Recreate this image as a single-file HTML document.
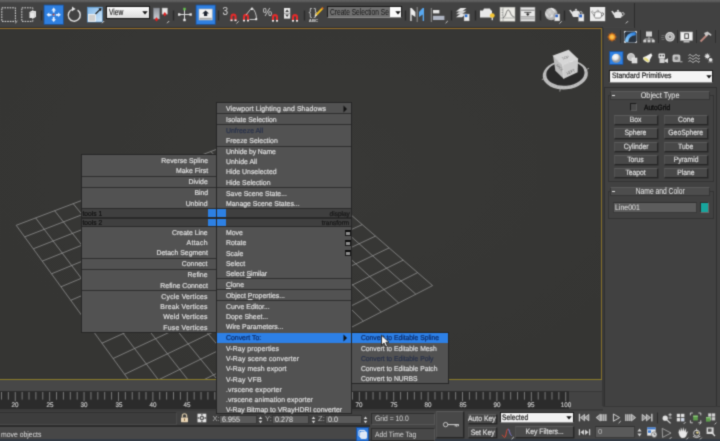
<!DOCTYPE html><html><head><meta charset="utf-8"><title>3ds Max</title><style>
*{box-sizing:border-box;margin:0;padding:0}
html,body{width:720px;height:441px;overflow:hidden;background:#444}
body{position:relative;filter:url(#soft);font-family:"Liberation Sans",Arial,sans-serif;font-size:7px;color:#e4e4e4;line-height:1}
.a{position:absolute}
.t{position:absolute;white-space:nowrap;line-height:10px;height:10px}
.mi{position:absolute;left:8.8px;white-space:nowrap;line-height:10px;height:10px;color:#dedede;transform:scaleX(.972) rotate(.03deg);transform-origin:0 50%;margin-top:.6px;-webkit-text-stroke:.22px}
.mr{position:absolute;right:9px;white-space:nowrap;line-height:10px;height:10px;color:#dedede;text-align:right;transform:scaleX(.972) rotate(.03deg);transform-origin:100% 50%;margin-top:.6px;-webkit-text-stroke:.22px}
.sep{position:absolute;left:0;right:0;height:1px;background:#2e2e2e}
.menu{position:absolute;background:#525252;border:1px solid #262626}
.btn{position:absolute;background:#484848;border:1px solid #262626;border-top-color:#5a5a5a;border-left-color:#525252;box-shadow:.5px .5px 0 #2a2a2a;color:#e0e0e0;text-align:center;font-size:7.5px;white-space:nowrap;display:flex;justify-content:center;-webkit-text-stroke:.15px}
.fld{position:absolute;background:#5a5a5a;border:1px solid #3a3a3a;border-top-color:#303030;color:#e2e2e2;white-space:nowrap;overflow:hidden}
u{text-decoration:underline}
.n{display:inline-block;transform:scaleX(.87) rotate(.03deg);transform-origin:0 50%}
.nc{display:inline-block;transform:scaleX(.88) rotate(.03deg);transform-origin:50% 50%}
</style></head><body><svg width="0" height="0" style="position:absolute"><filter id="soft" x="0" y="0" width="100%" height="100%" color-interpolation-filters="sRGB"><feConvolveMatrix order="3" kernelMatrix="0.0277 0.1110 0.0277 0.1110 0.4452 0.1110 0.0277 0.1110 0.0277" divisor="1" edgeMode="duplicate" preserveAlpha="true"/></filter></svg>
<div class="a" style="left:0;top:0;width:720px;height:3px;background:linear-gradient(#626262,#545454 70%,#3a3a3a)"></div>
<div class="a" style="left:0;top:3px;width:634px;height:24px;background:#424242"></div>
<div class="a" style="left:634px;top:3px;width:86px;height:25px;background:#414141;border-left:1px solid #2c2c2c"></div>
<div class="a" style="left:0;top:27px;width:603px;height:353px;background:#353535;border-top:1px solid #2e2e2e"></div>
<div class="a" style="left:-2px;top:27.8px;width:603.9px;height:351.8px;border:1.2px solid #86702a;border-top:1.1px solid #98702a;border-bottom:1.1px solid #8a7c2a;background:radial-gradient(ellipse at 55% 40%,#383836 0%,#353533 80%)"></div>
<svg class="a" style="left:0;top:29px" width="600" height="350" viewBox="0 29 600 350"><path d="M16.2 225.3L161.4 424.9M16.2 225.3L257.5 133.8M35.6 217.9L183.8 413.4M24.6 236.9L268.0 142.9M54.6 210.7L205.6 402.2M33.3 248.8L278.7 152.2M73.2 203.7L226.9 391.2M42.3 261.1L289.7 161.8M91.5 196.7L247.8 380.5M51.5 273.8L301.0 171.5M109.5 189.9L268.1 370.0M61.0 286.8L312.6 181.6M127.1 183.2L288.0 359.8M70.8 300.3L324.5 191.9M144.5 176.7L307.5 349.8M80.9 314.2L336.7 202.5M161.5 170.2L326.5 340.0M91.3 328.5L349.3 213.4M178.2 163.9L345.2 330.5M102.0 343.2L362.2 224.6M194.6 157.7L363.4 321.1M113.1 358.5L375.5 236.1M210.8 151.6L381.2 311.9M124.6 374.3L389.1 247.9M226.6 145.5L398.7 303.0M136.5 390.6L403.2 260.1M242.2 139.6L415.8 294.2M148.7 407.4L417.7 272.6M257.5 133.8L432.6 285.6M161.4 424.9L432.6 285.6" stroke="#989898" stroke-width="0.9" fill="none" opacity="0.8"/></svg>
<svg class="a" style="left:535px;top:42px" width="62" height="56" viewBox="535 42 62 56"><g transform="rotate(-5 565.3 74.7)"><ellipse cx="565.3" cy="74.2" rx="20" ry="12.6" fill="#282828" fill-opacity="0.8"/><path fill-rule="evenodd" d="M542.7 74.7A22.6 14.6 0 1 0 587.9 74.7A22.6 14.6 0 1 0 542.7 74.7ZM546.3 73.6A19.2 12.2 0 1 0 584.7 73.6A19.2 12.2 0 1 0 546.3 73.6Z" fill="#bebebe"/><path d="M541.5 77.5L544.5 76.5M586.5 71.5L589.5 70.3M559 88L558.4 91M571.5 60.8L572 58.5" stroke="#b0b0b0" stroke-width="0.8"/><ellipse cx="565.3" cy="74.4" rx="21" ry="12.7" fill="none" stroke="#8a8a8a" stroke-width="0.5" stroke-dasharray="0.8 2.4"/></g><path d="M553 55.6L568.6 49.8L578.1 58.8L562.5 65.2Z" fill="#d6d6d6"/><path d="M553 55.6L562.5 65.2L563.7 78.7L555.4 70.7Z" fill="#bcbcbc"/><path d="M562.5 65.2L578.1 58.8L577.6 72.3L563.7 78.7Z" fill="#cbcbcb"/><path d="M553 55.6L562.5 65.2L578.1 58.8M562.5 65.2L563.7 78.7" stroke="#f0f0f0" stroke-width="0.7" fill="none"/><text x="566.5" y="73.2" font-family="Liberation Sans, Arial, sans-serif" font-size="3.6" fill="#555" transform="rotate(-22 570 72)">LEFT</text><text x="562" y="59" font-family="Liberation Sans, Arial, sans-serif" font-size="3.4" fill="#666" transform="rotate(-20 565 58)">TOP</text><text x="556" y="67" font-family="Liberation Sans, Arial, sans-serif" font-size="3.2" fill="#666" transform="rotate(45 558 66)">BACK</text></svg>
<div class="a" style="left:0;top:380px;width:603px;height:11px;background:#474747"></div>
<div class="a" style="left:0;top:391px;width:568.5px;height:18px;background:#2b2b2b"></div>
<div class="a" style="left:568.5px;top:391px;width:34px;height:18px;background:#434343;border-top:1px solid #383838"></div>
<div class="a" style="left:0;top:409px;width:603px;height:2px;background:#3a3a3a"></div>
<svg class="a" style="left:0;top:391px" width="570" height="12" viewBox="0 391 570 12"><path d="M1.49 392V399.6M8.37 392V399.6M15.25 392V401.2M22.13 392V399.6M29.01 392V399.6M35.89 392V399.6M42.77 392V399.6M49.66 392V401.2M56.54 392V399.6M63.42 392V399.6M70.30 392V399.6M77.18 392V399.6M84.06 392V401.2M90.94 392V399.6M97.82 392V399.6M104.70 392V399.6M111.58 392V399.6M118.47 392V401.2M125.35 392V399.6M132.23 392V399.6M139.11 392V399.6M145.99 392V399.6M152.87 392V401.2M159.75 392V399.6M166.63 392V399.6M173.51 392V399.6M180.39 392V399.6M187.28 392V401.2M194.16 392V399.6M201.04 392V399.6M207.92 392V399.6M214.80 392V399.6M221.68 392V401.2M228.56 392V399.6M235.44 392V399.6M242.32 392V399.6M249.20 392V399.6M256.09 392V401.2M262.97 392V399.6M269.85 392V399.6M276.73 392V399.6M283.61 392V399.6M290.49 392V401.2M297.37 392V399.6M304.25 392V399.6M311.13 392V399.6M318.01 392V399.6M324.89 392V401.2M331.78 392V399.6M338.66 392V399.6M345.54 392V399.6M352.42 392V399.6M359.30 392V401.2M366.18 392V399.6M373.06 392V399.6M379.94 392V399.6M386.82 392V399.6M393.71 392V401.2M400.59 392V399.6M407.47 392V399.6M414.35 392V399.6M421.23 392V399.6M428.11 392V401.2M434.99 392V399.6M441.87 392V399.6M448.75 392V399.6M455.63 392V399.6M462.51 392V401.2M469.40 392V399.6M476.28 392V399.6M483.16 392V399.6M490.04 392V399.6M496.92 392V401.2M503.80 392V399.6M510.68 392V399.6M517.56 392V399.6M524.44 392V399.6M531.33 392V401.2M538.21 392V399.6M545.09 392V399.6M551.97 392V399.6M558.85 392V399.6M565.73 392V401.2" stroke="#828282" stroke-width="0.9" fill="none"/></svg>
<div class="t" style="left:5.2px;top:399.6px;width:20px;text-align:center;font-size:6.7px;color:#d0d0d0;transform:scaleX(.94) rotate(.03deg);-webkit-text-stroke:.15px">20</div>
<div class="t" style="left:39.7px;top:399.6px;width:20px;text-align:center;font-size:6.7px;color:#d0d0d0;transform:scaleX(.94) rotate(.03deg);-webkit-text-stroke:.15px">25</div>
<div class="t" style="left:74.1px;top:399.6px;width:20px;text-align:center;font-size:6.7px;color:#d0d0d0;transform:scaleX(.94) rotate(.03deg);-webkit-text-stroke:.15px">30</div>
<div class="t" style="left:108.5px;top:399.6px;width:20px;text-align:center;font-size:6.7px;color:#d0d0d0;transform:scaleX(.94) rotate(.03deg);-webkit-text-stroke:.15px">35</div>
<div class="t" style="left:142.9px;top:399.6px;width:20px;text-align:center;font-size:6.7px;color:#d0d0d0;transform:scaleX(.94) rotate(.03deg);-webkit-text-stroke:.15px">40</div>
<div class="t" style="left:177.3px;top:399.6px;width:20px;text-align:center;font-size:6.7px;color:#d0d0d0;transform:scaleX(.94) rotate(.03deg);-webkit-text-stroke:.15px">45</div>
<div class="t" style="left:211.7px;top:399.6px;width:20px;text-align:center;font-size:6.7px;color:#d0d0d0;transform:scaleX(.94) rotate(.03deg);-webkit-text-stroke:.15px">50</div>
<div class="t" style="left:246.1px;top:399.6px;width:20px;text-align:center;font-size:6.7px;color:#d0d0d0;transform:scaleX(.94) rotate(.03deg);-webkit-text-stroke:.15px">55</div>
<div class="t" style="left:280.5px;top:399.6px;width:20px;text-align:center;font-size:6.7px;color:#d0d0d0;transform:scaleX(.94) rotate(.03deg);-webkit-text-stroke:.15px">60</div>
<div class="t" style="left:314.9px;top:399.6px;width:20px;text-align:center;font-size:6.7px;color:#d0d0d0;transform:scaleX(.94) rotate(.03deg);-webkit-text-stroke:.15px">65</div>
<div class="t" style="left:349.3px;top:399.6px;width:20px;text-align:center;font-size:6.7px;color:#d0d0d0;transform:scaleX(.94) rotate(.03deg);-webkit-text-stroke:.15px">70</div>
<div class="t" style="left:383.7px;top:399.6px;width:20px;text-align:center;font-size:6.7px;color:#d0d0d0;transform:scaleX(.94) rotate(.03deg);-webkit-text-stroke:.15px">75</div>
<div class="t" style="left:418.1px;top:399.6px;width:20px;text-align:center;font-size:6.7px;color:#d0d0d0;transform:scaleX(.94) rotate(.03deg);-webkit-text-stroke:.15px">80</div>
<div class="t" style="left:452.5px;top:399.6px;width:20px;text-align:center;font-size:6.7px;color:#d0d0d0;transform:scaleX(.94) rotate(.03deg);-webkit-text-stroke:.15px">85</div>
<div class="t" style="left:486.9px;top:399.6px;width:20px;text-align:center;font-size:6.7px;color:#d0d0d0;transform:scaleX(.94) rotate(.03deg);-webkit-text-stroke:.15px">90</div>
<div class="t" style="left:521.3px;top:399.6px;width:20px;text-align:center;font-size:6.7px;color:#d0d0d0;transform:scaleX(.94) rotate(.03deg);-webkit-text-stroke:.15px">95</div>
<div class="t" style="left:555.7px;top:399.6px;width:20px;text-align:center;font-size:6.7px;color:#d0d0d0;transform:scaleX(.94) rotate(.03deg);-webkit-text-stroke:.15px">100</div>
<div class="a" style="left:0;top:411px;width:720px;height:14px;background:#444"></div><div class="a" style="left:0;top:411px;width:370px;height:14px;background:#404040"></div><div class="a" style="left:-2px;top:411.6px;width:178.5px;height:13px;background:#3d3d3d;border:1px solid #303030;border-bottom-color:#4a4a4a;border-right-color:#4a4a4a"></div>
<div class="a" style="left:0;top:424.7px;width:370px;height:2px;background:#2c2c2c"></div>
<div class="a" style="left:0;top:426.5px;width:370px;height:14.5px;background:#474747"></div>
<div class="a" style="left:0;top:439.2px;width:720px;height:1.8px;background:#333a44"></div>
<div class="t" style="left:1px;top:429.6px;font-size:7.8px;color:#dedede"><span class="n" style="transform:scaleX(.88) rotate(.03deg)">move objects</span></div>
<svg class="a" style="left:180px;top:413px" width="9" height="10" viewBox="0 0 9 10"><path d="M2.3 4.6V3A2.2 2.2 0 0 1 6.7 3V4.6" fill="none" stroke="#d9c9a8" stroke-width="1.1"/><rect x="1" y="4.4" width="7" height="4.8" rx="0.6" fill="#e8d4b4"/><rect x="4" y="5.6" width="1" height="2.2" fill="#8a6a40"/></svg>
<svg class="a" style="left:197px;top:413px" width="10" height="10" viewBox="0 0 10 10"><rect x="0.5" y="0.7" width="8.8" height="8.6" fill="#e4e4e4"/><circle cx="4.9" cy="5" r="2.3" fill="#555"/><path d="M4.9 0.7V2.6M4.9 7.4V9.3M0.5 5H2.4M7.4 5H9.3" stroke="#555" stroke-width="1.3"/><circle cx="4.9" cy="5" r="1" fill="#e4e4e4"/></svg>
<div class="t" style="left:212.5px;top:413.8px;font-size:7.6px;color:#b4b4b4">X:</div>
<div class="fld" style="left:219px;top:414.5px;width:38px;height:9.5px;font-size:7.8px;line-height:7.5px;padding-left:2px"><span class="n" style="transform:scaleX(.92) rotate(.03deg)">6.955</span></div>
<svg class="a" style="left:258.3px;top:415.6px" width="5" height="8" viewBox="0 0 5 8"><path d="M2.5 0.6L4.3 3H0.7ZM2.5 7.2L0.7 4.8H4.3Z" fill="#dadada"/></svg>
<div class="t" style="left:265px;top:413.8px;font-size:7.6px;color:#b4b4b4">Y:</div>
<div class="fld" style="left:271.5px;top:414.5px;width:37.5px;height:9.5px;font-size:7.8px;line-height:7.5px;padding-left:2px"><span class="n" style="transform:scaleX(.92) rotate(.03deg)">0.278</span></div>
<svg class="a" style="left:310.8px;top:415.6px" width="5" height="8" viewBox="0 0 5 8"><path d="M2.5 0.6L4.3 3H0.7ZM2.5 7.2L0.7 4.8H4.3Z" fill="#dadada"/></svg>
<div class="t" style="left:318px;top:413.8px;font-size:7.6px;color:#b4b4b4">Z:</div>
<div class="fld" style="left:324.5px;top:414.5px;width:37px;height:9.5px;font-size:7.8px;line-height:7.5px;padding-left:2px"><span class="n" style="transform:scaleX(.92) rotate(.03deg)">0.0</span></div>
<svg class="a" style="left:363.3px;top:415.6px" width="5" height="8" viewBox="0 0 5 8"><path d="M2.5 0.6L4.3 3H0.7ZM2.5 7.2L0.7 4.8H4.3Z" fill="#dadada"/></svg>
<div class="a" style="left:370.5px;top:412.5px;width:64px;height:12.5px;background:#484848;border:1px solid #2e2e2e;border-right-color:#565656;border-bottom-color:#565656;font-size:7.8px;line-height:10.5px;padding-left:3.5px;color:#d8d8d8;white-space:nowrap"><span class="n">Grid = 10.0</span></div>
<div class="a" style="left:370.5px;top:427.5px;width:64px;height:13.5px;background:#484848;border:1px solid #2e2e2e;border-right-color:#565656;font-size:7.8px;line-height:11.5px;padding-left:3.5px;color:#d8d8d8;white-space:nowrap"><span class="n">Add Time Tag</span></div>
<svg class="a" style="left:355.5px;top:427px" width="13" height="14" viewBox="0 0 13 14"><rect x="0.5" y="0.5" width="12" height="13.5" fill="#2d7be0" stroke="#1b4f9a"/><rect x="3" y="3.4" width="6" height="6" rx="0.8" fill="none" stroke="#f4f4f4" stroke-width="1"/><rect x="4.6" y="5" width="6" height="6.4" rx="0.8" fill="#dfe8f6" stroke="#f4f4f4" stroke-width="0.9"/></svg>
<div class="btn" style="left:435.8px;top:411px;width:28.4px;height:27.4px;background:#484848"></div>
<svg class="a" style="left:442px;top:420px" width="19" height="9" viewBox="0 0 19 9"><circle cx="3.6" cy="4.6" r="2.2" fill="none" stroke="#cfcfcf" stroke-width="0.9"/><path d="M5.8 4.6H16.8M13.2 4.6V6.4M14.8 4.6V6.9M16.4 4.6V6.2" stroke="#cfcfcf" stroke-width="1" fill="none"/></svg>
<div class="btn" style="left:467.5px;top:413.8px;width:29.4px;height:10px;line-height:8px;font-size:7.8px;background:#494949"><span class="nc">Auto Key</span></div>
<div class="btn" style="left:467.5px;top:426.7px;width:29.4px;height:11px;line-height:9px;font-size:7.8px;background:#494949"><span class="nc">Set Key</span></div>
<div class="a" style="left:500px;top:411.6px;width:73.5px;height:11.5px;background:#f2f2f2;border:1px solid #1e1e1e;border-bottom-color:#8a8a8a;color:#161616;font-size:8px;line-height:9.5px;padding-left:1px;white-space:nowrap"><span class="n" style="transform:scaleX(.84) rotate(.03deg);-webkit-text-stroke:.2px">Selected</span></div>
<svg class="a" style="left:566px;top:416.2px" width="6" height="4" viewBox="0 0 6 4"><path d="M0.3 0.3H5.7L3 3.6Z" fill="#111"/></svg>
<svg class="a" style="left:501px;top:426px" width="14" height="14" viewBox="0 0 14 14"><path d="M0.8 9C2 9 2.6 11.4 3.6 11.4C5.4 11.4 5 3 7 3C8.6 3 8.6 9.5 10.8 9.5" fill="none" stroke="#d84a3a" stroke-width="1"/><path d="M7 3C8.6 3 8.6 9.5 10.8 9.5" fill="none" stroke="#4a78d8" stroke-width="1"/><path d="M10.6 13.2L12.8 11" stroke="#ddd" stroke-width="0.9"/></svg>
<div class="btn" style="left:515px;top:426px;width:58.5px;height:12px;line-height:10px;font-size:7.8px;background:#4a4a4a"><span class="nc">Key Filters...</span></div>
<div class="a" style="left:603px;top:28px;width:117px;height:378px;background:#414141"></div>
<div class="a" style="left:602px;top:28px;width:2px;height:378px;background:#383838"></div>
<div class="a" style="left:620px;top:30px;width:1px;height:13px;background:#2f2f2f"></div>
<div class="a" style="left:640px;top:30px;width:1px;height:13px;background:#2f2f2f"></div>
<div class="a" style="left:658px;top:30px;width:1px;height:13px;background:#2f2f2f"></div>
<div class="a" style="left:677px;top:30px;width:1px;height:13px;background:#2f2f2f"></div>
<div class="a" style="left:696px;top:30px;width:1px;height:13px;background:#2f2f2f"></div>
<div class="a" style="left:715px;top:30px;width:1px;height:13px;background:#2f2f2f"></div>
<svg class="a" style="left:600px;top:28px" width="120" height="40" viewBox="600 28 120 40"><defs><radialGradient id="sun"><stop offset="0" stop-color="#fff8b8"/><stop offset="0.3" stop-color="#ffc840"/><stop offset="0.5" stop-color="#f09a28"/><stop offset="0.7" stop-color="#c8641a" stop-opacity="0.8"/><stop offset="1" stop-color="#6a3a1a" stop-opacity="0"/></radialGradient><radialGradient id="ball" cx="0.4" cy="0.35"><stop offset="0" stop-color="#fff"/><stop offset="0.6" stop-color="#e6e6e6"/><stop offset="1" stop-color="#9a9a9a"/></radialGradient><linearGradient id="arc" x1="0" y1="1" x2="1" y2="0"><stop offset="0" stop-color="#8fd0ff"/><stop offset="1" stop-color="#2a7fe0"/></linearGradient></defs><circle cx="612" cy="37" r="4.9" fill="url(#sun)"/><path d="M612 32V42M607 37H617M608.5 33.5L615.5 40.5M615.5 33.5L608.5 40.5" stroke="#e89030" stroke-width="0.5" opacity="0.6"/><rect x="624.5" y="31.5" width="12" height="11" fill="#2a3440" stroke="#8a98a8" stroke-width="0.6"/><path d="M626.6 41.8Q627 34.2 635.6 33.6" stroke="url(#arc)" stroke-width="3.3" fill="none"/><path d="M624.5 33V31.5H626M635 31.5H636.5V33M636.5 41V42.5H635M626 42.5H624.5V41" stroke="#f0f0f0" stroke-width="0.7" fill="none"/><rect x="646" y="31.5" width="6" height="5" fill="#cfcfcf"/><path d="M649 36.5V39M644.8 41V39H653.2V41" stroke="#bdbdbd" stroke-width="0.9" fill="none"/><rect x="643.3" y="39.8" width="3" height="2.6" fill="#cfcfcf"/><rect x="647.5" y="39.8" width="3" height="2.6" fill="#cfcfcf"/><rect x="651.7" y="39.8" width="3" height="2.6" fill="#cfcfcf"/><circle cx="670" cy="36.8" r="4.2" fill="#a8a8a8" stroke="#dcdcdc" stroke-width="1.2"/><circle cx="670" cy="36.8" r="1.9" fill="#777" stroke="#ececec" stroke-width="0.8"/><path d="M661.5 35.5H664.5M661 37.5H664M661.5 39.5H664.5" stroke="#7a7a7a" stroke-width="0.7"/><rect x="680.5" y="32" width="12" height="8.4" fill="#f0f0f0" stroke="#bbb" stroke-width="0.6"/><rect x="684.8" y="33.8" width="3.6" height="4.6" fill="none" stroke="#333" stroke-width="0.9"/><rect x="683.5" y="41.2" width="6" height="1.2" fill="#ddd"/><path d="M700.5 41.5L707.5 34.5" stroke="#c08a80" stroke-width="1.8"/><path d="M704 33L707.5 31.5L711.5 34.5L711 36L708.5 34.5L706 36.5Z" fill="#c9c9c9"/><rect x="609.5" y="51.5" width="13.5" height="13" fill="#2d80e3" stroke="#1b4f9a" stroke-width="0.8"/><circle cx="616.2" cy="58.2" r="4.5" fill="url(#ball)"/><circle cx="631" cy="57" r="3.6" fill="#bdbdbd" stroke="#e8e8e8" stroke-width="0.8"/><rect x="632" y="58" width="5" height="5" fill="#d9d9d9" stroke="#f2f2f2" stroke-width="0.6"/><path d="M651.2 53.2L652.2 55.4L649 61.6L643.6 57.6Z" fill="#f2f2f2"/><ellipse cx="646.4" cy="59.6" rx="3.5" ry="1.7" fill="#e6dc7a" stroke="#f4f4f4" stroke-width="0.7" transform="rotate(36 646.4 59.6)"/><rect x="658.5" y="53.5" width="6.5" height="5" rx="1" fill="#e0e0e0"/><rect x="659.5" y="58.5" width="5" height="4.5" fill="#cfcfcf"/><path d="M664.5 60L668 58.3V63L664.5 61.5Z" fill="#dcdcdc"/><circle cx="660.5" cy="55.6" r="0.9" fill="#444"/><circle cx="663.3" cy="55.6" r="0.9" fill="#444"/><rect x="673" y="55" width="6.8" height="6.6" rx="1" fill="#b9b9b9" stroke="#e6e6e6" stroke-width="0.8"/><circle cx="676.4" cy="58.3" r="1.7" fill="#777"/><path d="M679.8 61.8H682.5" stroke="#ddd" stroke-width="0.8"/><path d="M688.5 55.5Q690 53.5 691.5 55.5T694.5 55.5T697.5 55.5T699.5 55M688.5 58.5Q690 56.5 691.5 58.5T694.5 58.5T697.5 58.5T699.5 58M688.5 61.5Q690 59.5 691.5 61.5T694.5 61.5T697.5 61.5T699.5 61" stroke="#c8c8c8" stroke-width="0.9" fill="none"/><circle cx="707.3" cy="56.2" r="2" fill="#f0f0f0"/><circle cx="710.6" cy="59.8" r="1.9" fill="#e4e4e4"/><path d="M707.3 53V59.4M704.2 56.2H710.4M705.1 54L709.5 58.4M709.5 54L705.1 58.4" stroke="#d8d8d8" stroke-width="0.6"/><path d="M708 62H713" stroke="#bbb" stroke-width="0.6"/></svg>
<div class="a" style="left:609px;top:70px;width:104px;height:12.5px;background:#f4f4f4;border:1px solid #1e1e1e;border-bottom-color:#888;color:#1c1c1c;font-size:7.9px;line-height:10.5px;padding-left:1.8px;white-space:nowrap"><span class="n" style="-webkit-text-stroke:.2px">Standard Primitives</span></div>
<svg class="a" style="left:705.5px;top:75px" width="6" height="4" viewBox="0 0 6 4"><path d="M0.3 0.3H5.7L3 3.6Z" fill="#111"/></svg>
<div class="a" style="left:604px;top:87px;width:113px;height:319.5px;border:1px solid #303030"></div><div class="a" style="left:603px;top:406px;width:117px;height:1px;background:#383838"></div>
<div class="a" style="left:607.5px;top:95px;width:106.5px;height:86.5px;border:1px solid #333"></div>
<div class="a" style="left:610px;top:91px;width:100px;height:9px;background:#4d4d4d;border:1px solid #363636;border-top-color:#5a5a5a;color:#ececec;font-size:8.3px;line-height:7.5px;text-align:center;white-space:nowrap"><span class="nc">Object Type</span></div>
<div class="a" style="left:612px;top:94.5px;width:3px;height:1px;background:#ddd"></div>
<div class="a" style="left:629.7px;top:103px;width:7.5px;height:7.5px;background:#4a4a4a;border:1px solid #1c1c1c;border-right-color:#5a5a5a;border-bottom-color:#5a5a5a"></div>
<div class="t" style="left:644px;top:102.5px;color:#0c0c0c;font-size:7.6px;-webkit-text-stroke:.3px"><span class="n">AutoGrid</span></div>
<div class="btn" style="left:614px;top:114.6px;width:43.5px;height:10.4px;line-height:8.4px;font-size:7.7px"><span class="nc">Box</span></div>
<div class="btn" style="left:664px;top:114.6px;width:43.5px;height:10.4px;line-height:8.4px;font-size:7.7px"><span class="nc">Cone</span></div>
<div class="btn" style="left:614px;top:128.2px;width:43.5px;height:10.4px;line-height:8.4px;font-size:7.7px"><span class="nc">Sphere</span></div>
<div class="btn" style="left:664px;top:128.2px;width:43.5px;height:10.4px;line-height:8.4px;font-size:7.7px"><span class="nc">GeoSphere</span></div>
<div class="btn" style="left:614px;top:141.6px;width:43.5px;height:10.4px;line-height:8.4px;font-size:7.7px"><span class="nc">Cylinder</span></div>
<div class="btn" style="left:664px;top:141.6px;width:43.5px;height:10.4px;line-height:8.4px;font-size:7.7px"><span class="nc">Tube</span></div>
<div class="btn" style="left:614px;top:154.6px;width:43.5px;height:10.4px;line-height:8.4px;font-size:7.7px"><span class="nc">Torus</span></div>
<div class="btn" style="left:664px;top:154.6px;width:43.5px;height:10.4px;line-height:8.4px;font-size:7.7px"><span class="nc">Pyramid</span></div>
<div class="btn" style="left:614px;top:167.8px;width:43.5px;height:10.4px;line-height:8.4px;font-size:7.7px"><span class="nc">Teapot</span></div>
<div class="btn" style="left:664px;top:167.8px;width:43.5px;height:10.4px;line-height:8.4px;font-size:7.7px"><span class="nc">Plane</span></div>
<div class="a" style="left:607.5px;top:191px;width:106.5px;height:27.5px;border:1px solid #333"></div>
<div class="a" style="left:610px;top:186.7px;width:100px;height:9.3px;background:#4d4d4d;border:1px solid #363636;border-top-color:#5a5a5a;color:#ececec;font-size:8.3px;line-height:7.8px;text-align:center;white-space:nowrap"><span class="nc" style="transform:scaleX(.81)">Name and Color</span></div>
<div class="a" style="left:612px;top:191px;width:3px;height:1px;background:#ddd"></div>
<div class="fld" style="left:612.5px;top:201.7px;width:84px;height:11px;font-size:8px;line-height:9px;padding-left:1.5px;background:#5c5c5c"><span class="n">Line001</span></div>
<div class="a" style="left:699.5px;top:201.7px;width:9.8px;height:11.3px;background:#17a59d;border:1px solid #2e2e2e;border-right-color:#6a6a6a;border-bottom-color:#6a6a6a"></div>
<svg class="a" style="left:0;top:0" width="640" height="28" viewBox="0 0 640 28"><defs><linearGradient id="pv" x1="0" y1="0" x2="0" y2="1"><stop offset="0" stop-color="#8d9299"/><stop offset="1" stop-color="#c9ccd2"/></linearGradient><linearGradient id="sc" x1="0" y1="0" x2="1" y2="1"><stop offset="0" stop-color="#7fb6e8"/><stop offset="1" stop-color="#cfe6f8"/></linearGradient><radialGradient id="mat" cx="0.4" cy="0.35"><stop offset="0" stop-color="#fff"/><stop offset="0.65" stop-color="#ececec"/><stop offset="1" stop-color="#b0b0b0"/></radialGradient></defs><rect x="1.8" y="7.8" width="13.6" height="13.6" fill="none" stroke="#e4e4e4" stroke-width="1" stroke-dasharray="1.6 1"/><path d="M15.2 23.2L17.4 21.0" stroke="#ddd" stroke-width="0.9"/><rect x="21.8" y="7.8" width="11" height="13.6" fill="none" stroke="#dcdcdc" stroke-width="1" stroke-dasharray="1.6 1"/><path d="M29.5 12.5L31 11H36V16.5L34.5 18H29.5Z" fill="#e9e9e9"/><path d="M29.5 12.5H34.5V18M34.5 12.5L36 11" stroke="#bdbdbd" stroke-width="0.5" fill="none"/><rect x="40.8" y="10.5" width="1.4" height="10" fill="#2a2a2a"/><rect x="44" y="5" width="19.5" height="19.5" fill="#2e7fe0" stroke="#1d4f94" stroke-width="0.8"/><path d="M53.7 7.6L56 10.4H54.6V12.6H52.8V10.4H51.4ZM53.7 22L51.4 19.2H52.8V17H54.6V19.2H56ZM46.5 14.8L49.3 12.5V13.9H51.5V15.7H49.3V17.1ZM60.9 14.8L58.1 17.1V15.7H55.9V13.9H58.1V12.5Z" fill="#e8f2ff"/><rect x="52.9" y="14" width="1.7" height="1.7" fill="#f4f4f4" stroke="#a03030" stroke-width="0.5"/><path d="M72.6 9.4A6 6 0 1 0 77.6 10.2" fill="none" stroke="#e2e2e2" stroke-width="1.4"/><path d="M72 6.6L75.6 9L72 11.2Z" fill="#e2e2e2"/><rect x="87.5" y="7.2" width="14.8" height="14.8" fill="url(#sc)" stroke="#5a9bd8" stroke-width="0.6"/><rect x="88.5" y="14.5" width="7" height="6.8" fill="#cfcfcf" stroke="#f4f4f4" stroke-width="0.8"/><path d="M95.5 14L100.5 9" stroke="#1a1a1a" stroke-width="1.1"/><path d="M101.6 8L98.4 8.6L101 11.2Z" fill="#1a1a1a"/><path d="M102 23.2L104.2 21.0" stroke="#ddd" stroke-width="0.9"/><rect x="153.3" y="8" width="6.4" height="11" fill="url(#pv)" stroke="#6f7379" stroke-width="0.5"/><path d="M156.5 17.2L158.3 19.4L156.5 21.6L154.7 19.4Z" fill="#e02020"/><rect x="162" y="8" width="5.6" height="6.2" fill="#e6e6e6" stroke="#999" stroke-width="0.5"/><path d="M164.8 12L166.5 14.2L164.8 16.4L163.1 14.2Z" fill="#e02020"/><path d="M167 23.2L169.2 21.0" stroke="#ddd" stroke-width="0.9"/><rect x="172.8" y="10.5" width="1.4" height="10" fill="#2a2a2a"/><path d="M184.5 9V20M178.5 14.5H191" stroke="#d8d8d8" stroke-width="1"/><rect x="183.3" y="7.8" width="2.4" height="2.4" fill="#68c850"/><rect x="178" y="13.3" width="2.4" height="2.4" fill="#e8e8e8"/><rect x="189.4" y="13.3" width="2.4" height="2.4" fill="#e8e8e8"/><rect x="183.3" y="18.8" width="2.4" height="2.4" fill="#e8e8e8"/><rect x="196" y="5" width="19.3" height="19.5" fill="#2e7fe0" stroke="#1d4f94" stroke-width="0.8"/><rect x="199" y="9" width="13.2" height="11" fill="#f2f2f2" stroke="#b8b8b8" stroke-width="0.6"/><rect x="199.5" y="17.8" width="12.2" height="1.8" fill="#a9a9a9"/><path d="M205.6 10.4L209 13.6H207.2V16H204V13.6H202.2Z" fill="#1e2430"/><rect x="217.8" y="10.5" width="1.4" height="10" fill="#2a2a2a"/><text x="222.5" y="15.2" font-family="Liberation Sans, Arial, sans-serif" font-size="10" fill="#d8d8d8">3</text><path d="M230.5 20.5V16.5A3 3 0 0 1 236.5 16.5V20.5H234.5V16.7A1 1 0 0 0 232.5 16.7V20.5Z" fill="#e42a2a"/><rect x="230.5" y="19.5" width="2" height="1.6" fill="#f2f2f2"/><rect x="234.5" y="19.5" width="2" height="1.6" fill="#f2f2f2"/><path d="M236.5 23.5L238.7 21.3" stroke="#ddd" stroke-width="0.9"/><path d="M243 20.8V16.8A3 3 0 0 1 249 16.8V20.8H247V17.0A1 1 0 0 0 245 17.0V20.8Z" fill="#e42a2a"/><rect x="243" y="19.8" width="2" height="1.6" fill="#f2f2f2"/><rect x="247" y="19.8" width="2" height="1.6" fill="#f2f2f2"/><path d="M246 15L252 7.5Q256.5 12 256.5 19.5H249.5" fill="none" stroke="#d4d4d4" stroke-width="0.9"/><rect x="251" y="8.2" width="1.8" height="1.8" fill="#eee"/><rect x="255.2" y="18.2" width="2" height="2" fill="#eee"/><text x="262.8" y="15.8" font-family="Liberation Sans, Arial, sans-serif" font-size="10.5" fill="#d8d8d8">%</text><path d="M272 21V17A3 3 0 0 1 278 17V21H276V17.2A1 1 0 0 0 274 17.2V21Z" fill="#e42a2a"/><rect x="272" y="20" width="2" height="1.6" fill="#f2f2f2"/><rect x="276" y="20" width="2" height="1.6" fill="#f2f2f2"/><rect x="284" y="8" width="6.2" height="10.6" fill="#e8e8e8"/><path d="M287.1 9.6L289 12H285.2ZM287.1 17L285.2 14.6H289Z" fill="#444"/><path d="M284 13.3H290.2" stroke="#777" stroke-width="0.6"/><path d="M292 21V17A3 3 0 0 1 298 17V21H296V17.2A1 1 0 0 0 294 17.2V21Z" fill="#e42a2a"/><rect x="292" y="20" width="2" height="1.6" fill="#f2f2f2"/><rect x="296" y="20" width="2" height="1.6" fill="#f2f2f2"/><rect x="303.8" y="10.5" width="1.4" height="10" fill="#2a2a2a"/><text x="308.6" y="16" font-family="Liberation Sans, Arial, sans-serif" font-size="11" fill="#c4c4c4" textLength="8.6" lengthAdjust="spacing">{}</text><text x="308.8" y="22.3" font-family="Liberation Sans, Arial, sans-serif" font-size="3.6" font-weight="bold" fill="#d8d8d8" textLength="9.3" lengthAdjust="spacingAndGlyphs">ABC</text><path d="M315.8 15.4L322.2 8.6" stroke="#f0c020" stroke-width="2"/><path d="M322 8.8L323 7.7" stroke="#e07020" stroke-width="2"/><path d="M315 16.4L316.6 14.6" stroke="#eee" stroke-width="1.4"/><rect x="404.8" y="10.5" width="1.4" height="10" fill="#2a2a2a"/><path d="M410.3 8H411.6L415.4 12V17L411.6 14.5V21H410.3Z" fill="#ececec"/><path d="M417.2 7V22" stroke="#9a9a9a" stroke-width="0.9"/><path d="M424 8H422.7L419 12V17L422.7 14.5V21H424Z" fill="#58a8f0"/><path d="M431.3 8V22" stroke="#9a9a9a" stroke-width="0.9"/><rect x="433" y="10" width="6.4" height="3.4" fill="#e4e4e4"/><rect x="433" y="15.8" width="11.4" height="4.2" fill="#aeb4c2"/><path d="M445.6 23.2L447.8 21.0" stroke="#ddd" stroke-width="0.9"/><rect x="450.8" y="10.5" width="1.4" height="10" fill="#2a2a2a"/><path d="M456 11.5L460.5 8H466.5L462 11.5Z" fill="#e8e8e8"/><path d="M456 14.3L460.5 10.8H466.5L462 14.3Z" fill="#d0d0d0"/><path d="M456 17.3L460.5 13.8H466.5L462 17.3Z" fill="#e4e4e4"/><rect x="464" y="14" width="5.4" height="7" fill="#e9e9e9" stroke="#888" stroke-width="0.4"/><rect x="464.8" y="14.5" width="2.6" height="2.6" fill="#2a6fd0"/><rect x="474.8" y="10.5" width="1.4" height="10" fill="#2a2a2a"/><path d="M480 10.5H483L484 8.5H490L491 10.5H492V17.5H480Z" fill="#e9e9e9"/><circle cx="492.3" cy="15.6" r="2.4" fill="#f4c430"/><rect x="491.6" y="17.6" width="1.4" height="2.6" fill="#ddd"/><rect x="500" y="7.2" width="15" height="14" fill="#ecebe6" stroke="#b5b5b0" stroke-width="0.5"/><path d="M503 7.5V21M500.5 18H515" stroke="#8a8a8a" stroke-width="0.6"/><path d="M503 17.5C506 17.5 506 10 508.2 10S510.5 17 514.5 17" fill="none" stroke="#555" stroke-width="0.8"/><path d="M501.5 10H503M501.5 12.5H503M501.5 15H503" stroke="#666" stroke-width="0.5"/><rect x="520.4" y="7.2" width="14.6" height="14" fill="#e9e9e9" stroke="#9a9a9a" stroke-width="0.5"/><rect x="520.8" y="9.6" width="13.8" height="1.2" fill="#8a8a8a"/><rect x="520.8" y="16.4" width="13.8" height="1" fill="#8a8a8a"/><rect x="520.8" y="18.4" width="13.8" height="1" fill="#9a9a9a"/><path d="M524.3 12.4H531.3" stroke="#333" stroke-width="0.8"/><path d="M527.8 12.4V14.2" stroke="#333" stroke-width="1"/><path d="M525.8 13.8H529.8L527.8 16Z" fill="#2a2a2a"/><rect x="539.8" y="10.5" width="1.4" height="10" fill="#2a2a2a"/><circle cx="551.2" cy="14" r="6.2" fill="url(#mat)"/><path d="M547 9.5L549.5 12L547 14.5L544.8 12ZM552 9.5L554.5 12L552 14.5L549.5 12ZM549.5 12.2L552 14.7L549.5 17.2L547 14.7ZM554.5 12.2L556.8 14.7L554.5 17.2L552 14.7ZM549.5 7.2L552 9.5L549.5 11.8L547.2 9.5Z" fill="#555" opacity="0.3"/><rect x="554.5" y="14" width="5.4" height="7" fill="#e9e9e9" stroke="#888" stroke-width="0.4"/><rect x="555.3" y="14.6" width="2.6" height="2.6" fill="#2a5fc0"/><path d="M559.5 23.5L561.7 21.3" stroke="#ddd" stroke-width="0.9"/><rect x="563.8" y="10.5" width="1.4" height="10" fill="#2a2a2a"/><g transform="translate(569 8.2) scale(1.0)"><path d="M3 5.5C3 2.8 5 2.2 7 2.2C9 2.2 11 2.8 11 5.5C11 7.4 10.2 8.6 9.4 8.9H4.6C3.8 8.6 3 7.4 3 5.5Z" fill="#e4e4e4" stroke="none" stroke-width="0.7"/><circle cx="7" cy="1.5" r="0.9" fill="#e4e4e4" stroke="none" stroke-width="0.5"/><path d="M3.4 6.6C2 5.6 1.7 3.3 0.2 2.3L1.3 1.6C2.7 2.6 3 3.6 3.9 4Z" fill="#e4e4e4" stroke="none" stroke-width="0.6"/><path d="M10.8 3.7C13.6 2.6 14 5.8 11 6.9" fill="none" stroke="#e4e4e4" stroke-width="0.9"/></g><rect x="578.4" y="14" width="5.6" height="7.2" fill="#e9e9e9" stroke="#888" stroke-width="0.4"/><rect x="579.2" y="14.6" width="2.8" height="2.8" fill="#2a5fc0"/><rect x="590" y="7" width="15.2" height="14.2" fill="#ececec"/><g transform="translate(591.2 9.6) scale(0.95)"><path d="M3 5.5C3 2.8 5 2.2 7 2.2C9 2.2 11 2.8 11 5.5C11 7.4 10.2 8.6 9.4 8.9H4.6C3.8 8.6 3 7.4 3 5.5Z" fill="#f6f6f6" stroke="#555" stroke-width="0.7"/><circle cx="7" cy="1.5" r="0.9" fill="#f6f6f6" stroke="#555" stroke-width="0.5"/><path d="M3.4 6.6C2 5.6 1.7 3.3 0.2 2.3L1.3 1.6C2.7 2.6 3 3.6 3.9 4Z" fill="#f6f6f6" stroke="#555" stroke-width="0.6"/><path d="M10.8 3.7C13.6 2.6 14 5.8 11 6.9" fill="none" stroke="#555" stroke-width="0.9"/></g><g transform="translate(611 9.2) scale(1.0)"><path d="M3 5.5C3 2.8 5 2.2 7 2.2C9 2.2 11 2.8 11 5.5C11 7.4 10.2 8.6 9.4 8.9H4.6C3.8 8.6 3 7.4 3 5.5Z" fill="#e4e4e4" stroke="none" stroke-width="0.7"/><circle cx="7" cy="1.5" r="0.9" fill="#e4e4e4" stroke="none" stroke-width="0.5"/><path d="M3.4 6.6C2 5.6 1.7 3.3 0.2 2.3L1.3 1.6C2.7 2.6 3 3.6 3.9 4Z" fill="#e4e4e4" stroke="none" stroke-width="0.6"/><path d="M10.8 3.7C13.6 2.6 14 5.8 11 6.9" fill="none" stroke="#e4e4e4" stroke-width="0.9"/></g><path d="M625.8 23.4L628.0 21.2" stroke="#ddd" stroke-width="0.9"/></svg>
<div class="a" style="left:106px;top:6px;width:43.5px;height:12.5px;background:linear-gradient(#fafafa,#dcdcdc);border:1px solid #1a1a1a;color:#2a2a2a;font-size:8.8px;line-height:10.5px;padding-left:1.5px;white-space:nowrap"><span class="n" style="transform:scaleX(.75) rotate(.03deg);-webkit-text-stroke:.2px">View</span></div>
<svg class="a" style="left:141.5px;top:10.8px" width="6" height="4" viewBox="0 0 6 4"><path d="M0.3 0.3H5.7L3 3.6Z" fill="#111"/></svg>
<div class="a" style="left:326.7px;top:5.6px;width:75.5px;height:12.4px;background:#707070;border:1px solid #1a1a1a;border-bottom-color:#8a8a8a;color:#141414;font-size:8.4px;line-height:10px;padding-left:2.5px;white-space:nowrap;overflow:hidden"><span class="n" style="transform:scaleX(.79)">Create Selection Se</span></div>
<div class="a" style="left:390.3px;top:6.6px;width:11px;height:10.4px;background:#fbfbfb"></div>
<svg class="a" style="left:395.3px;top:10.5px" width="6" height="4" viewBox="0 0 6 4"><path d="M0.3 0.3H5.7L3 3.6Z" fill="#111"/></svg>
<svg class="a" style="left:575px;top:410px" width="145" height="31" viewBox="575 410 145 31"><rect x="578.8" y="413.8" width="1.3" height="7.6" fill="#d2d2d2"/><path d="M580.6 417.6L584.6 414.40000000000003V420.8ZM584.8 417.6L588.8 414.40000000000003V420.8Z" fill="#d2d2d2" fill-opacity="0.55" stroke="#d2d2d2" stroke-width="0.9"/><rect x="588.8" y="413.8" width="1.2" height="7.6" fill="#d2d2d2" opacity="0"/><path d="M596.2 417.6L600.4 414.3V420.90000000000003Z" fill="#d2d2d2" fill-opacity="0.55" stroke="#d2d2d2" stroke-width="0.9"/><rect x="601.2" y="414.20000000000005" width="1.3" height="6.8" fill="#d2d2d2"/><rect x="603.2" y="414.20000000000005" width="1.3" height="6.8" fill="#d2d2d2"/><rect x="605.2" y="414.20000000000005" width="1.3" height="6.8" fill="#d2d2d2"/><path d="M613.4 414.0L619.6 417.6L613.4 421.20000000000005Z" fill="none" stroke="#d2d2d2" stroke-width="1"/><path d="M618.6 423.2L620.8 421" stroke="#ddd" stroke-width="0.9"/><rect x="625.2" y="414.20000000000005" width="1.3" height="6.8" fill="#d2d2d2"/><rect x="627.2" y="414.20000000000005" width="1.3" height="6.8" fill="#d2d2d2"/><rect x="629.2" y="414.20000000000005" width="1.3" height="6.8" fill="#d2d2d2"/><path d="M635.6 417.6L631.4 414.3V420.90000000000003Z" fill="#d2d2d2" fill-opacity="0.55" stroke="#d2d2d2" stroke-width="0.9"/><path d="M646.2 417.6L642.2 414.40000000000003V420.8ZM650.4 417.6L646.4 414.40000000000003V420.8Z" fill="#d2d2d2" fill-opacity="0.55" stroke="#d2d2d2" stroke-width="0.9"/><rect x="651.2" y="413.8" width="1.3" height="7.6" fill="#d2d2d2"/><rect x="657" y="412.5" width="1" height="11" fill="#2c2c2c"/><circle cx="665.2" cy="418.2" r="2.6" fill="#e0e0e0"/><path d="M667 420L670.6 423.4" stroke="#cfcfcf" stroke-width="1.3"/><path d="M668.4 414.8H671.8M670.1 413.2V416.6M668.6 418H671.6" stroke="#e0e0e0" stroke-width="0.8"/><rect x="676.8" y="413.8" width="3.4" height="3.4" fill="#e0e0e0"/><rect x="681" y="413.8" width="3.4" height="3.4" fill="#e0e0e0"/><rect x="676.8" y="418" width="3.4" height="3.4" fill="#e0e0e0"/><rect x="681" y="418" width="3.4" height="3.4" fill="#cfd6e4"/><path d="M683.6 424L685.6 422" stroke="#ddd" stroke-width="0.8"/><path d="M690.4 415.4V413H692.8M698.4 413H700.8V415.4M700.8 420.4V422.8H698.4M692.8 422.8H690.4V420.4" fill="none" stroke="#d4d4d4" stroke-width="0.9"/><rect x="693.2" y="415.6" width="4.6" height="4.8" fill="#5e9e4c"/><rect x="693.2" y="415.6" width="4.6" height="1.4" fill="#8cc47a"/><path d="M699.6 424.4L701.4 422.6" stroke="#ddd" stroke-width="0.8"/><rect x="708.2" y="413.4" width="3.2" height="3.2" fill="#d2d2d2"/><rect x="712" y="413.4" width="3.2" height="3.2" fill="#d2d2d2"/><rect x="708.2" y="417.2" width="3.2" height="3.2" fill="#c4c4c4"/><rect x="712" y="417.2" width="3.2" height="3.2" fill="#c8c8c8"/><rect x="706" y="417" width="4.4" height="4.6" fill="#5e9e4c"/><rect x="706" y="417" width="4.4" height="1.3" fill="#8cc47a"/><path d="M714.6 424.4L716.4 422.6" stroke="#ddd" stroke-width="0.8"/><rect x="578.8" y="429.2" width="1.2" height="6" fill="#d2d2d2"/><path d="M580.4 432.2L584 429.4V435.0ZM588.6 432.2L585 429.4V435.0Z" fill="#d2d2d2"/><rect x="589" y="429.2" width="1.2" height="6" fill="#d2d2d2"/><rect x="647.2" y="427.4" width="8.4" height="8.2" fill="#e6e6e6"/><rect x="647.2" y="427.4" width="8.4" height="2" fill="#3a78d0"/><rect x="648" y="430.4" width="3" height="2.4" fill="#3a78d0"/><circle cx="654.2" cy="434.6" r="2.8" fill="#dcdcdc" stroke="#555" stroke-width="0.6"/><path d="M654.2 433V434.8H655.6" stroke="#333" stroke-width="0.6" fill="none"/><path d="M662.2 428.4L671 433L662.6 437.4Z" fill="none" stroke="#b4b4b4" stroke-width="0.8"/><path d="M669.6 439L671.6 437" stroke="#ddd" stroke-width="0.8"/><path d="M678.6 432.6L679.4 429.4L680.6 431.6L681 427.8L682.4 431.2L683.4 427.6L684.4 431.4L685.8 428.6L686 432.4L687.8 431.4L686 436.4Q684.6 438.2 681.8 438Q679.6 437.2 678.6 432.6Z" fill="#e9e9e9" stroke="#bbb" stroke-width="0.3"/><path d="M686.4 439.4L688.2 437.6" stroke="#ddd" stroke-width="0.8"/><circle cx="696.6" cy="433.2" r="3" fill="none" stroke="#d6d6d6" stroke-width="0.9"/><path d="M696.6 428.6V431.2M693 436.4Q696.6 439 700.4 436.2" stroke="#d6d6d6" stroke-width="0.9" fill="none"/><circle cx="697.4" cy="432.6" r="1.2" fill="#e8d890"/><path d="M700 439.4L701.8 437.6" stroke="#ddd" stroke-width="0.8"/><rect x="706.6" y="427.4" width="7" height="6.6" fill="#d8d8d8"/><rect x="708" y="428.6" width="3.6" height="3.2" fill="#555"/><path d="M711 432L715 436" stroke="#e0e0e0" stroke-width="1.3"/></svg>
<div class="fld" style="left:594.5px;top:426px;width:40.5px;height:11.8px;font-size:7.8px;line-height:9.8px;padding-left:2.5px;color:#c0c0c0;background:#5a5a5a">0</div>
<svg class="a" style="left:636.8px;top:427.6px" width="5" height="9" viewBox="0 0 5 9"><path d="M2.5 0.6L4.6 3.4H0.4ZM2.5 8.4L0.4 5.6H4.6Z" fill="#d0d0d0"/></svg>
<div class="menu" style="left:216px;top:102px;width:136px;height:312.4px;font-size:7.1px">
<div class="sep" style="top:9.5px"></div>
<div class="sep" style="top:20.5px"></div>
<div class="sep" style="top:42.5px"></div>
<div class="sep" style="top:84.0px"></div>
<div class="sep" style="top:175.0px"></div>
<div class="sep" style="top:186.0px"></div>
<div class="sep" style="top:196.5px"></div>
<div class="a" style="left:0;right:0;top:105px;height:19px;background:#2a2a2a"></div>
<div class="a" style="left:0;right:0;top:106.3px;height:8px;background:#3f3f3f"></div>
<div class="a" style="left:0;right:0;top:115.6px;height:7.6px;background:#3f3f3f"></div>
<div class="a" style="left:0;top:106px;width:8.5px;height:8.3px;background:#2d80e3"></div>
<div class="a" style="left:0;top:115.6px;width:8.5px;height:7.6px;background:#2d80e3"></div>
<div class="mr" style="top:105.6px;right:1.5px;color:#161616;font-size:6.7px">display</div>
<div class="mr" style="top:114.5px;right:1.5px;color:#161616;font-size:6.7px">transform</div>
<div class="mi" style="top:0.6px;letter-spacing:0.13px">Viewport Lighting and Shadows</div>
<svg class="a" style="left:126px;top:2.1px" width="5" height="8" viewBox="0 0 5 8"><path d="M0.5 0.5L4 4L0.5 7.5Z" fill="#111"/></svg>
<div class="mi" style="top:11.4px">Isolate Selection</div>
<div class="mi" style="top:22.5px;color:#27304a">Unfreeze All</div>
<div class="mi" style="top:32.5px">Freeze Selection</div>
<div class="mi" style="top:43.2px;letter-spacing:-0.12px">Unhide by Name</div>
<div class="mi" style="top:53.9px">Unhide All</div>
<div class="mi" style="top:63.9px">Hide Unselected</div>
<div class="mi" style="top:74.2px">Hide Selection</div>
<div class="mi" style="top:85.1px">Save Scene State...</div>
<div class="mi" style="top:95.5px">Manage Scene States...</div>
<div class="mi" style="top:124.6px">Move</div>
<div class="a" style="left:128px;top:126.7px;width:5.6px;height:6px;background:#8c8c8c;border:1px solid #1a1a1a;border-top:2px solid #0c0c0c"></div>
<div class="mi" style="top:134.6px">Rotate</div>
<div class="a" style="left:128px;top:136.7px;width:5.6px;height:6px;background:#8c8c8c;border:1px solid #1a1a1a;border-top:2px solid #0c0c0c"></div>
<div class="mi" style="top:145.1px">Scale</div>
<div class="a" style="left:128px;top:147.2px;width:5.6px;height:6px;background:#8c8c8c;border:1px solid #1a1a1a;border-top:2px solid #0c0c0c"></div>
<div class="mi" style="top:155.5px">Select</div>
<div class="mi" style="top:165.5px;letter-spacing:-0.09px">Select <u>S</u>imilar</div>
<div class="mi" style="top:176.8px"><u>C</u>lone</div>
<div class="mi" style="top:187.1px">Object <u>P</u>roperties...</div>
<div class="mi" style="top:198.4px">Curve Editor...</div>
<div class="mi" style="top:208.5px">Dope Sheet...</div>
<div class="mi" style="top:218.9px">Wire Parameters...</div>
<div class="a" style="left:0;right:0;top:229.5px;height:10.6px;background:#2d80e6"></div>
<div class="mi" style="top:229.6px;color:#0c2a66">Convert To:</div>
<svg class="a" style="left:126px;top:231px" width="5" height="8" viewBox="0 0 5 8"><path d="M0.5 0.5L4 4L0.5 7.5Z" fill="#111"/></svg>
<div class="mi" style="top:240.1px;letter-spacing:0.11px">V-Ray properties</div>
<div class="mi" style="top:250.8px;letter-spacing:0.17px">V-Ray scene converter</div>
<div class="mi" style="top:260.8px;letter-spacing:0.12px">V-Ray mesh export</div>
<div class="mi" style="top:271.0px;letter-spacing:0.18px">V-Ray VFB</div>
<div class="mi" style="top:281.3px;letter-spacing:0.16px">.vrscene exporter</div>
<div class="mi" style="top:291.5px;letter-spacing:0.07px">.vrscene animation exporter</div>
<div class="mi" style="top:301.8px">V-Ray Bitmap to VRayHDRI converter</div>
</div>
<div class="menu" style="left:81px;top:154px;width:136px;height:178.5px;font-size:7.1px;border-left-width:1.5px">
<div class="sep" style="top:20.5px"></div>
<div class="sep" style="top:31.5px"></div>
<div class="sep" style="top:102.5px"></div>
<div class="sep" style="top:113.5px"></div>
<div class="sep" style="top:134.5px"></div>
<div class="a" style="left:0;right:0;top:53px;height:19px;background:#2a2a2a"></div>
<div class="a" style="left:0;right:0;top:54.3px;height:8px;background:#3f3f3f"></div>
<div class="a" style="left:0;right:0;top:63.6px;height:7.6px;background:#3f3f3f"></div>
<div class="a" style="right:0;top:54px;width:8.2px;height:8.3px;background:#2d80e3"></div>
<div class="a" style="right:0;top:63.6px;width:8.2px;height:7.6px;background:#2d80e3"></div>
<div class="t" style="left:0.5px;top:53.9px;color:#101010;-webkit-text-stroke:.2px;font-size:6.7px">tools 1</div>
<div class="t" style="left:0.5px;top:63.0px;color:#101010;-webkit-text-stroke:.2px;font-size:6.7px">tools 2</div>
<div class="mr" style="top:0.5px;right:8.2px">Reverse Spline</div>
<div class="mr" style="top:10.8px;right:8.2px">Make First</div>
<div class="mr" style="top:21.7px;right:8.2px">Divide</div>
<div class="mr" style="top:32.4px;right:8.2px">Bind</div>
<div class="mr" style="top:43.0px;right:8.2px">Unbind</div>
<div class="mr" style="top:72.7px;right:8.2px">Create Line</div>
<div class="mr" style="top:82.8px;right:8.2px;letter-spacing:0.28px;margin-right:-0.27px">Attach</div>
<div class="mr" style="top:92.8px;right:8.2px">Detach Segment</div>
<div class="mr" style="top:103.8px;right:8.2px">Connect</div>
<div class="mr" style="top:114.8px;right:8.2px">Refine</div>
<div class="mr" style="top:125.0px;right:8.2px">Refine Connect</div>
<div class="mr" style="top:136.0px;right:8.2px;letter-spacing:0.2px;margin-right:-0.19px">Cycle Vertices</div>
<div class="mr" style="top:146.3px;right:8.2px;letter-spacing:0.21px;margin-right:-0.20px">Break Vertices</div>
<div class="mr" style="top:156.5px;right:8.2px;letter-spacing:0.18px;margin-right:-0.17px">Weld Vertices</div>
<div class="mr" style="top:167.0px;right:8.2px;letter-spacing:0.21px;margin-right:-0.20px">Fuse Vertices</div>
</div>
<div class="menu" style="left:351px;top:331.5px;width:97.5px;height:52px;font-size:7.1px">
<div class="a" style="left:0;right:0;top:0.5px;height:9.6px;background:#2d80e6"></div>
<div class="mi" style="left:8.7px;top:0.0px;color:#0c2a66;transform:scaleX(.951) rotate(.03deg)">Convert to Editable Spline</div>
<div class="mi" style="left:8.7px;top:10.5px;color:#dedede;transform:scaleX(.951) rotate(.03deg)">Convert to Editable Mesh</div>
<div class="mi" style="left:8.7px;top:20.8px;color:#27304a;transform:scaleX(.951) rotate(.03deg)">Convert to Editable Poly</div>
<div class="mi" style="left:8.7px;top:31.2px;color:#dedede;transform:scaleX(.951) rotate(.03deg)">Convert to Editable Patch</div>
<div class="mi" style="left:8.7px;top:41.3px;color:#dedede;transform:scaleX(.951) rotate(.03deg)">Convert to NURBS</div>
</div>
<svg class="a" style="left:380px;top:334px" width="12" height="15" viewBox="0 0 12 15"><path d="M1.5 1.2L1.5 11.2L4 9L5.8 13L7.6 12.2L5.9 8.3L9 8.2Z" fill="#f4f4f4" stroke="#222" stroke-width="0.9" stroke-linejoin="round"/></svg>
</body></html>
